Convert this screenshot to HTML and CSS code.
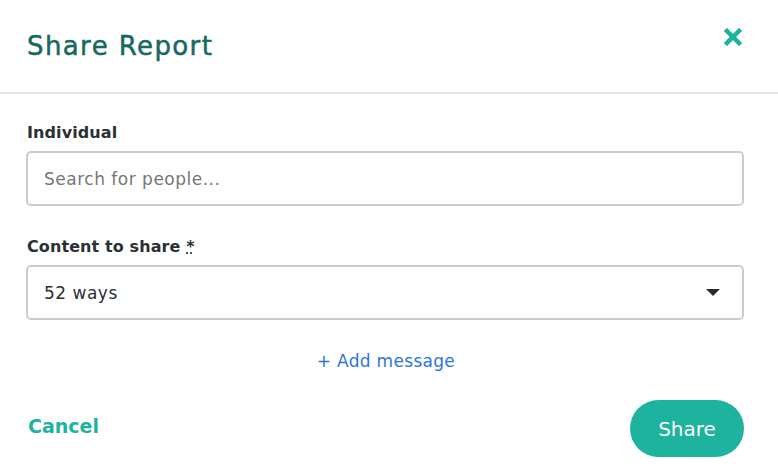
FILE: index.html
```html
<!DOCTYPE html>
<html lang="en">

<head>
    <title>Share Report</title>
    <link rel="stylesheet" href="styles.css">
</head>

<body>
    <div class="modal">
        <!-- Header -->
        <div class="modal-header">
            <h1>Share Report</h1>
            <button class="close" aria-label="Close">
                <svg width="18" height="18" viewBox="0 0 18 18">
                    <path d="M3 3 L15 15 M15 3 L3 15" stroke="#1db39e" stroke-width="4.5" stroke-linecap="square" />
                </svg>
            </button>
        </div>

        <!-- Form body -->
        <div class="modal-body">
            <div class="field">
                <label for="people">Individual</label>
                <input type="text" id="people" placeholder="Search for people...">
            </div>

            <div class="field">
                <label>Content to share <abbr title="required">*</abbr></label>
                <div class="select">
                    <span>52 ways</span>
                    <span class="caret"></span>
                </div>
            </div>

            <a href="#" class="add-message">+ Add message</a>
        </div>

        <!-- Footer -->
        <div class="modal-footer">
            <a href="#" class="cancel">Cancel</a>
            <button class="share">Share</button>
        </div>
    </div>
</body>

</html>
```

FILE: styles.css
```css
* {
    margin: 0;
    padding: 0;
    box-sizing: border-box;
}

body {
    font-family: 'DejaVu Sans', sans-serif;
    background-color: #ffffff;
    color: #2b2f36;
}

.modal-header {
    display: flex;
    justify-content: space-between;
    align-items: flex-start;
    height: 94px;
    padding: 27px 36px 0 27px;
    border-bottom: 2px solid #e6e6e6;
}

h1 {
    font-size: 26px;
    font-weight: 400;
    color: #17695f;
    line-height: 38px;
    letter-spacing: 1.4px;
    -webkit-text-stroke: 0.5px #17695f;
}

.close {
    background: none;
    border: none;
    margin-top: 1px;
    cursor: pointer;
}

.modal-body {
    padding: 28px 34px 0 26px;
    display: flex;
    flex-direction: column;
}

.field {
    margin-bottom: 30px;
}

label {
    display: block;
    font-size: 16px;
    font-weight: 700;
    line-height: 21px;
    margin-bottom: 8px;
    margin-left: 1px;
    letter-spacing: 0.1px;
}

abbr {
    text-decoration: underline dotted;
}

input,
.select {
    width: 100%;
    height: 55px;
    border: 2px solid #cccccc;
    border-radius: 5px;
    padding: 0 16px;
    font-family: inherit;
    font-size: 17px;
    letter-spacing: 0.5px;
    color: #2b2f36;
}

input::placeholder {
    color: #767676;
}

.select {
    display: flex;
    align-items: center;
    justify-content: space-between;
}

.caret {
    width: 0;
    height: 0;
    border-left: 7px solid transparent;
    border-right: 7px solid transparent;
    border-top: 7px solid #2b2b2b;
    margin-right: 6px;
}

.add-message {
    align-self: center;
    color: #2c74e0;
    text-decoration: none;
    font-size: 17px;
    letter-spacing: 0.3px;
    margin-top: 1px;
    margin-left: 2px;
}

.modal-footer {
    display: flex;
    justify-content: space-between;
    align-items: center;
    padding: 29px 34px 0 28px;
}

.cancel {
    color: #1db39e;
    font-weight: 700;
    font-size: 19px;
    text-decoration: none;
    margin-top: -5px;
}

.share {
    background-color: #1db39e;
    color: #ffffff;
    border: none;
    border-radius: 29px;
    width: 114px;
    height: 57px;
    font-family: inherit;
    font-size: 20px;
    font-weight: 400;
    cursor: pointer;
}
```
